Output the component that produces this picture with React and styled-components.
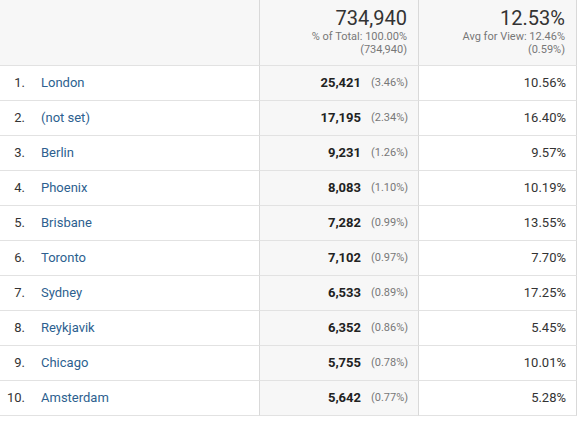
import React from "react";
import styled, { createGlobalStyle } from "styled-components";

const GlobalStyle = createGlobalStyle`
  html, body {
    margin: 0;
    padding: 0;
    background: #fff;
    font-family: Roboto, "Liberation Sans", Arial, sans-serif;
  }
`;

const rows = [
  ["London", "25,421", "3.46%", "10.56%"],
  ["(not set)", "17,195", "2.34%", "16.40%"],
  ["Berlin", "9,231", "1.26%", "9.57%"],
  ["Phoenix", "8,083", "1.10%", "10.19%"],
  ["Brisbane", "7,282", "0.99%", "13.55%"],
  ["Toronto", "7,102", "0.97%", "7.70%"],
  ["Sydney", "6,533", "0.89%", "17.25%"],
  ["Reykjavik", "6,352", "0.86%", "5.45%"],
  ["Chicago", "5,755", "0.78%", "10.01%"],
  ["Amsterdam", "5,642", "0.77%", "5.28%"],
];

const Table = styled.div`
  display: grid;
  grid-template-columns: 259px 159px 159px;
  width: 577px;
`;

const HeadCell = styled.div`
  box-sizing: border-box;
  height: 66px;
  background: #f7f7f7;
  border-bottom: 1px solid #e2e2e2;
  border-left: ${(p) => (p.$first ? "none" : "1px solid #d9d9d9")};
  border-right: ${(p) => (p.$last ? "1px solid #d9d9d9" : "none")};
  padding: 6px 11px 0 0;
  text-align: right;
`;

const BigValue = styled.div`
  font-size: 20px;
  line-height: 24px;
  color: #333;
  font-weight: 400;
`;

const SubLine = styled.div`
  font-size: 11px;
  line-height: 13px;
  color: #777;
`;

const Cell = styled.div`
  box-sizing: border-box;
  height: 35px;
  border-bottom: 1px solid #e2e2e2;
  border-left: ${(p) => (p.$first ? "none" : "1px solid #d9d9d9")};
  border-right: ${(p) => (p.$last ? "1px solid #d9d9d9" : "none")};
  background: ${(p) => (p.$shade ? "#f7f7f7" : "#fff")};
  display: flex;
  align-items: center;
  justify-content: ${(p) => (p.$first ? "flex-start" : "flex-end")};
  padding: 0 10px 1px 0;
  font-size: 13px;
  color: #333;
`;

const Index = styled.span`
  width: 25px;
  text-align: right;
  color: #333;
`;

const Name = styled.a`
  margin-left: 16px;
  color: #2d5f8f;
  text-decoration: none;
`;

const Metric = styled.span`
  font-weight: 700;
  color: #222;
`;

const Share = styled.span`
  font-size: 11px;
  color: #777;
  margin-left: 10px;
  width: 37px;
  text-align: right;
`;

export default function App() {
  return (
    <>
      <GlobalStyle />
      <Table>
        <HeadCell $first />
        <HeadCell>
          <BigValue>734,940</BigValue>
          <SubLine>% of Total: 100.00%</SubLine>
          <SubLine>(734,940)</SubLine>
        </HeadCell>
        <HeadCell $last>
          <BigValue>12.53%</BigValue>
          <SubLine>Avg for View: 12.46%</SubLine>
          <SubLine>(0.59%)</SubLine>
        </HeadCell>
        {rows.map(([name, value, share, rate], i) => (
          <React.Fragment key={name}>
            <Cell $first>
              <Index>{i + 1}.</Index>
              <Name href="#">{name}</Name>
            </Cell>
            <Cell $shade>
              <Metric>{value}</Metric>
              <Share>({share})</Share>
            </Cell>
            <Cell $last>{rate}</Cell>
          </React.Fragment>
        ))}
      </Table>
    </>
  );
}
